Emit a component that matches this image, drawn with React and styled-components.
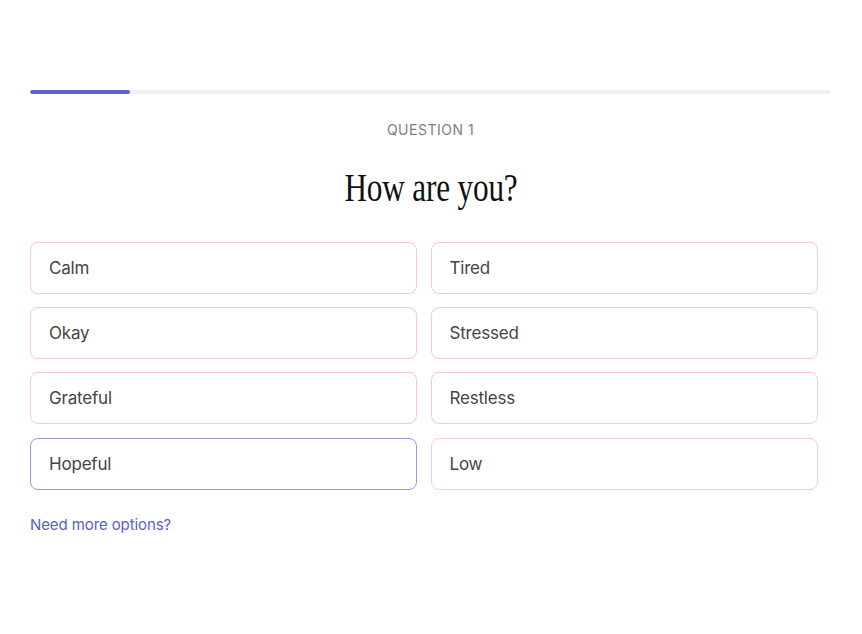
import React from "react";
import styled, { createGlobalStyle } from "styled-components";

const Global = createGlobalStyle`
  html, body { margin: 0; padding: 0; background: #ffffff; }
  body { font-family: Inter, "Noto Sans", sans-serif; -webkit-font-smoothing: antialiased; }
  * { box-sizing: border-box; }
`;

const Page = styled.main`
  width: 862px;
  min-height: 634px;
  padding: 90px 31px 0 30px;
  display: flex;
  flex-direction: column;
`;

const Track = styled.div`
  height: 4px;
  width: 100%;
  background: #f1f1f1;
  border-radius: 2px;
  overflow: hidden;
`;

const Fill = styled.div`
  height: 100%;
  background: #5d61c9;
  border-radius: 2px;
`;

const Eyebrow = styled.div`
  margin-top: 26.5px;
  text-align: center;
  font-family: Inter, sans-serif;
  font-size: 14px;
  line-height: 17px;
  letter-spacing: 0.5px;
  color: #808080;
`;

const TitleRow = styled.h1`
  margin: 26px 0 0;
  text-align: center;
  font-weight: 400;
  line-height: 48px;
  height: 48px;
`;

const Title = styled.span`
  display: inline-block;
  font-family: "Liberation Serif", "Times New Roman", serif;
  font-size: 40px;
  color: #111111;
  transform: scaleX(0.78);
  transform-origin: center;
  letter-spacing: -0.2px;
`;

const Grid = styled.div`
  margin-top: 30.2px;
  display: grid;
  grid-template-columns: repeat(2, 387px);
  column-gap: 13.5px;
  row-gap: 13.33px;
`;

const Option = styled.button`
  height: 52px;
  display: flex;
  align-items: center;
  padding: 0 0 0 18px;
  background: #ffffff;
  border: ${(p) => (p.$active ? "1.5px solid #a98fdf" : "1px solid #f9c6da")};
  border-radius: 8px;
  font-family: Inter, sans-serif;
  font-size: 17px;
  letter-spacing: -0.2px;
  color: #454545;
  text-align: left;
  cursor: pointer;
`;

const MoreLink = styled.a`
  margin-top: 25px;
  align-self: flex-start;
  font-family: Inter, sans-serif;
  font-size: 15px;
  line-height: 20px;
  letter-spacing: -0.1px;
  color: #5b60c8;
  text-decoration: none;
  cursor: pointer;
`;

const options = [
  "Calm",
  "Tired",
  "Okay",
  "Stressed",
  "Grateful",
  "Restless",
  "Hopeful",
  "Low",
];

export default function App() {
  const progress = 100 / 801;
  return (
    <>
      <Global />
      <Page>
        <Track>
          <Fill style={{ width: `${progress * 100}%` }} />
        </Track>
        <Eyebrow>QUESTION 1</Eyebrow>
        <TitleRow>
          <Title>How are you?</Title>
        </TitleRow>
        <Grid>
          {options.map((o) => (
            <Option key={o} $active={o === "Hopeful"}>
              {o}
            </Option>
          ))}
        </Grid>
        <MoreLink>Need more options?</MoreLink>
      </Page>
    </>
  );
}
